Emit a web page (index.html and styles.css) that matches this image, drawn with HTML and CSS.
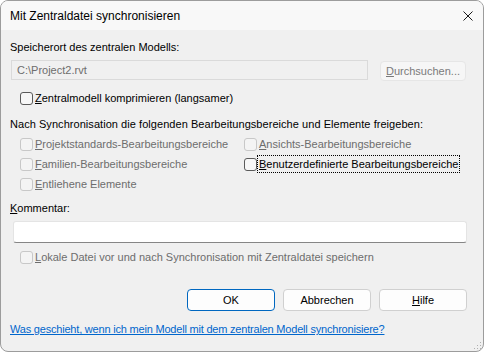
FILE: index.html
```html
<!DOCTYPE html>
<html lang="de">
<head>
    <meta charset="UTF-8">
    <title>Mit Zentraldatei synchronisieren</title>
    <link rel="stylesheet" href="styles.css">
</head>
<body>
    <div class="dialog">
        <!-- Title bar -->
        <div class="titlebar">
            <span class="title">Mit Zentraldatei synchronisieren</span>
            <svg class="close" width="10" height="10" viewBox="0 0 10 10">
                <path d="M0.5 0.5 L9.5 9.5 M9.5 0.5 L0.5 9.5" stroke="#1a1a1a" stroke-width="1" fill="none"/>
            </svg>
        </div>

        <div class="content">
            <div class="label location-label">Speicherort des zentralen Modells:</div>
            <div class="path-row">
                <div class="path-box">C:\Project2.rvt</div>
                <div class="btn btn-browse"><u>D</u>urchsuchen...</div>
            </div>

            <label class="check compress">
                <span class="box"></span>
                <span class="text"><u>Z</u>entralmodell komprimieren (langsamer)</span>
            </label>

            <div class="label release-label">Nach Synchronisation die folgenden Bearbeitungsbereiche und Elemente freigeben:</div>
            <div class="release-grid">
                <label class="check disabled">
                    <span class="box"></span>
                    <span class="text"><u>P</u>rojektstandards-Bearbeitungsbereiche</span>
                </label>
                <label class="check disabled">
                    <span class="box"></span>
                    <span class="text"><u>A</u>nsichts-Bearbeitungsbereiche</span>
                </label>
                <label class="check disabled">
                    <span class="box"></span>
                    <span class="text"><u>F</u>amilien-Bearbeitungsbereiche</span>
                </label>
                <label class="check">
                    <span class="box"></span>
                    <span class="text focused"><u>B</u>enutzerdefinierte Bearbeitungsbereiche</span>
                </label>
                <label class="check disabled">
                    <span class="box"></span>
                    <span class="text"><u>E</u>ntliehene Elemente</span>
                </label>
            </div>

            <div class="label comment-label"><u>K</u>ommentar:</div>
            <div class="comment-box"></div>

            <label class="check disabled save-local">
                <span class="box"></span>
                <span class="text"><u>L</u>okale Datei vor und nach Synchronisation mit Zentraldatei speichern</span>
            </label>

            <div class="buttons">
                <div class="btn btn-default">OK</div>
                <div class="btn">Abbrechen</div>
                <div class="btn"><u>H</u>ilfe</div>
            </div>

            <a href="#" class="help-link">Was geschieht, wenn ich mein Modell mit dem zentralen Modell synchronisiere?</a>
        </div>

        <svg class="grip" width="9" height="9" viewBox="0 0 9 9">
            <rect x="7" y="1" width="1" height="1" fill="#b0b0b0"/>
            <rect x="4" y="4" width="1" height="1" fill="#b0b0b0"/>
            <rect x="7" y="4" width="1" height="1" fill="#b0b0b0"/>
            <rect x="1" y="7" width="1" height="1" fill="#b0b0b0"/>
            <rect x="4" y="7" width="1" height="1" fill="#b0b0b0"/>
            <rect x="7" y="7" width="1" height="1" fill="#b0b0b0"/>
        </svg>
    </div>
</body>
</html>
```

FILE: styles.css
```css
/* General */
body {
    margin: 0;
    background: #fff;
    font-family: 'Liberation Sans', Arial, sans-serif;
    font-size: 11px;
    color: #000;
}

.dialog {
    position: relative;
    box-sizing: border-box;
    width: 484px;
    height: 352px;
    border: 1px solid #9c9c9c;
    border-radius: 8px;
    background: #f0f0f0;
    overflow: hidden;
}

/* Title bar */
.titlebar {
    height: 29px;
    display: flex;
    align-items: center;
    justify-content: space-between;
    padding: 0 10px 0 9px;
    background: #f8f8f8;
}

.title {
    font-size: 12px;
    line-height: 16px;
}

.close {
    display: block;
    margin-top: 1px;
}

/* Content */
.content {
    display: flex;
    flex-direction: column;
    align-items: flex-start;
    padding: 9px 0 0 9px;
}

.label {
    line-height: 16px;
}

u {
    text-decoration: underline;
    text-underline-offset: 1px;
}

.path-row {
    display: flex;
    margin-top: 5px;
    height: 21px;
}

.path-box {
    box-sizing: border-box;
    width: 357px;
    height: 20px;
    margin-left: 1px;
    padding-left: 5px;
    border: 1px solid #dadada;
    background: #f0f0f0;
    color: #6d6d6d;
    line-height: 18px;
}

.btn {
    box-sizing: border-box;
    width: 88px;
    height: 22px;
    border: 1px solid #d0d0d0;
    border-radius: 4px;
    background: #fdfdfd;
    text-align: center;
    line-height: 20px;
}

.btn-browse {
    width: 86px;
    height: 20px;
    margin: 1px 0 0 12px;
    line-height: 18px;
    border-color: #e6e6e6;
    background: #f6f6f6;
    color: #7a7a7a;
}

.btn-default {
    border-color: #0067c0;
}

/* Checkboxes */
.check {
    display: flex;
    align-items: center;
    height: 20px;
    margin-left: 10px;
}

.check .box {
    box-sizing: border-box;
    width: 13px;
    height: 13px;
    border: 1px solid #5a5a5a;
    border-radius: 3px;
    background: #f7f7f7;
}

.check .text {
    padding: 1px;
    border: 1px dotted transparent;
    line-height: 14px;
    white-space: nowrap;
}

.check .text.focused {
    border-color: #000;
}

.check.disabled .box {
    border-color: #c8c8c8;
    background: #f4f4f4;
}

.check.disabled .text {
    color: #6d6d6d;
}

.compress {
    margin-top: 7px;
}

.release-label {
    margin-top: 8px;
    letter-spacing: 0.05px;
}

.release-grid {
    display: grid;
    grid-template-columns: 224px 224px;
    grid-auto-rows: 20px;
    margin: 2px 0 0 10px;
}

.release-grid .check {
    margin-left: 0;
}

.comment-label {
    margin-top: 6px;
}

.comment-box {
    box-sizing: border-box;
    width: 454px;
    height: 22px;
    margin: 5px 0 0 3px;
    border: 1px solid #e4e4e4;
    border-bottom-color: #868686;
    border-radius: 3px;
    background: #fff;
}

.save-local {
    margin-top: 4px;
}

/* Buttons */
.buttons {
    display: flex;
    gap: 8px;
    align-self: flex-end;
    margin: 22px 16px 0 0;
}

.help-link {
    margin-top: 10px;
    color: #0066cc;
    line-height: 16px;
    letter-spacing: -0.2px;
    text-decoration: underline;
}

.grip {
    position: absolute;
    right: 1px;
    bottom: 1px;
}
```
